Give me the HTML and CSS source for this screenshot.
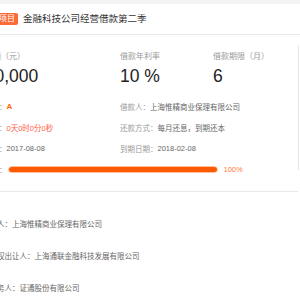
FILE: index.html
```html
<!DOCTYPE html>
<html lang="zh-CN">
<head>
<meta charset="utf-8">
<link rel="stylesheet" href="styles.css">
</head>
<body>
<div class="topbar"></div>
<div class="header">
  <span class="badge">项目</span>
  <span class="title">金融科技公司经营借款第二季</span>
</div>
<div class="content">
  <div class="main">
    <div class="upper">
      <div class="stats">
        <div class="stat">
          <div class="stat-label">借款金额（元）</div>
          <div class="stat-value amount">100,000</div>
        </div>
        <div class="stat">
          <div class="stat-label">借款年利率</div>
          <div class="stat-value">10 %</div>
        </div>
        <div class="stat">
          <div class="stat-label">借款期限（月）</div>
          <div class="stat-value">6</div>
        </div>
      </div>
      <div class="rows">
        <div class="row"><span class="lbl">信用等级：</span><span class="grade">A</span></div>
        <div class="row"><span class="lbl">借款人：</span><span class="val">上海惟精商业保理有限公司</span></div>
        <div class="row"><span class="lbl">剩余时间：</span><span class="countdown">0天0时0分0秒</span></div>
        <div class="row"><span class="lbl">还款方式：</span><span class="val">每月还息，到期还本</span></div>
        <div class="row"><span class="lbl">发布日期：</span><span class="val">2017-08-08</span></div>
        <div class="row"><span class="lbl">到期日期：</span><span class="val">2018-02-08</span></div>
        <div class="row progress-row">
          <span class="lbl">投资进度：</span>
          <span class="bar"><span class="fill" style="width:100%"></span></span>
          <span class="pct">100%</span>
        </div>
      </div>
    </div>
    <div class="lower">
      <div class="lrow">担保：</div>
      <div class="lrow">借款人：上海惟精商业保理有限公司</div>
      <div class="lrow spaced">原债权出让人：上海通联金融科技发展有限公司</div>
      <div class="lrow spaced">原债务人：证通股份有限公司</div>
    </div>
  </div>
  <div class="side"></div>
</div>
</body>
</html>
```

FILE: styles.css
```css
html, body {
  margin: 0;
  padding: 0;
  background: #fff;
  overflow: hidden;
}
body {
  font-family: "Liberation Sans", "Noto Sans CJK SC", sans-serif;
  color: #333;
  width: 300px;
  height: 300px;
}
.topbar {
  height: 4px;
  background: #f3f3f3;
}
.header {
  height: 30px;
  border-bottom: 1px solid #e8e8e8;
  display: flex;
  align-items: center;
}
.badge {
  margin-left: -4px;
  height: 12px;
  line-height: 12px;
  padding: 0 3px;
  background: #fc6a37;
  color: #fff;
  font-size: 8px;
  border-radius: 2px;
}
.title {
  margin-left: 5px;
  font-size: 9.5px;
  color: #333;
  line-height: 12px;
}
.content {
  display: flex;
}
.main {
  width: 298px;
  flex: none;
}
.side {
  flex: 1;
  margin-top: 10px;
  height: 125px;
  border-left: 1px solid #e6e6e6;
}
.upper {
  margin-left: -31px;
  padding-top: 16px;
  padding-bottom: 11px;
  border-bottom: 1px solid #e8e8e8;
}
.stats {
  display: grid;
  grid-template-columns: 151px 93px 85px;
}
.stat-label {
  font-size: 8px;
  line-height: 12px;
  color: #999;
}
.stat-value {
  margin-top: 1px;
  font-size: 17.5px;
  line-height: 24px;
  color: #222;
}
.stat-value.amount {
  padding-left: 6px;
}
.rows {
  margin-top: 8px;
  display: grid;
  grid-template-columns: 151px 178px;
  grid-auto-rows: 21px;
  font-size: 7.5px;
}
.row {
  display: flex;
  align-items: center;
  white-space: nowrap;
}
.lbl {
  color: #999;
}
.val {
  color: #666;
}
.grade {
  color: #ff6a00;
  font-weight: bold;
  font-size: 8px;
}
.countdown {
  color: #ff5a45;
}
.progress-row {
  grid-column: 1 / 3;
}
.bar {
  margin-left: 1px;
  width: 208px;
  height: 5px;
  border: 1px solid #ffc09a;
  border-radius: 4px;
  background: #fff;
  display: flex;
}
.fill {
  display: block;
  height: 100%;
  background: #ff5a00;
  border-radius: 3px;
}
.pct {
  margin-left: 6px;
  color: #ff7a33;
}
.lower {
  margin-left: -18px;
  padding-top: 10px;
  font-size: 7.5px;
  color: #666;
}
.lrow {
  line-height: 15px;
  white-space: nowrap;
}
.lrow.spaced {
  margin-top: 17px;
}
```
